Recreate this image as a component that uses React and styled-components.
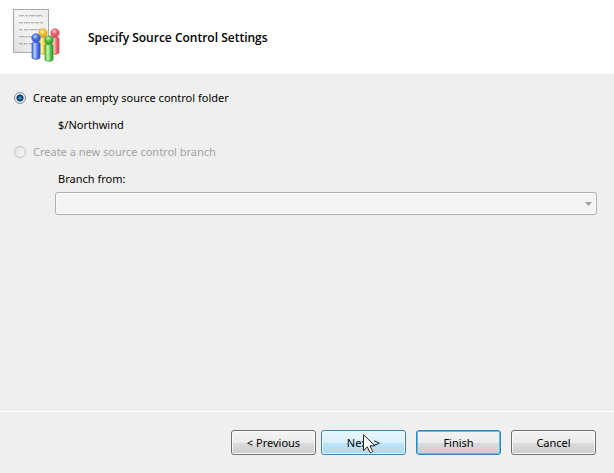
import React, { useState } from "react";
import styled, { createGlobalStyle, css } from "styled-components";

const GlobalStyle = createGlobalStyle`
  * { box-sizing: border-box; }
  body {
    margin: 0;
    background: #efefef;
    color: #000;
    font-family: "Noto Sans", "Open Sans", sans-serif;
    font-size: 11px;
  }
`;

const Wizard = styled.div`
  display: flex;
  flex-direction: column;
  min-height: 100vh;
`;

const Header = styled.header`
  display: flex;
  align-items: flex-start;
  gap: 24px;
  height: 74px;
  padding: 8px 12px;
  background: #fff;
`;

const Title = styled.h1`
  margin: 0;
  padding-top: 20px;
  font-family: "Open Sans", "Noto Sans", sans-serif;
  font-size: 12px;
  line-height: 20px;
  font-weight: 600;
`;

const Content = styled.main`
  flex: 1;
  padding: 10px 17px 10px 14px;
`;

const Option = styled.label`
  display: flex;
  align-items: center;
  gap: 7px;
  height: 27px;
  color: ${(p) => (p.$disabled ? "#a3a3a3" : "#000")};
`;

const Radio = styled.input`
  appearance: none;
  width: 12px;
  height: 12px;
  margin: 0;
  border: 1px solid #8b9196;
  border-radius: 50%;
  background: radial-gradient(circle, #e2e5e7 0 3px, #f7f7f7 5px);

  &:checked {
    background: radial-gradient(circle, #5cc8f0 0, #1c83b5 1px, #0b3458 3px, #e8ecee 4px);
  }

  &:disabled {
    border-color: #bfc2c4;
    background: linear-gradient(135deg, #e0e0e0, #fafafa);
  }
`;

const Detail = styled.div`
  display: flex;
  align-items: center;
  height: 27px;
  padding-left: 44px;
`;

const SelectBox = styled.div`
  display: grid;
  align-items: center;
  margin-left: 41px;

  > * { grid-area: 1 / 1; }
`;

const Select = styled.select`
  appearance: none;
  width: 100%;
  height: 23px;
  padding: 0 20px 0 6px;
  border: 1px solid #abb1b0;
  border-radius: 3px;
  background: #f4f4f4;
  box-shadow: inset 0 0 0 1px #fcfcfc;
  font: inherit;
  opacity: 1;
`;

const Arrow = styled.svg`
  justify-self: end;
  margin-right: 5px;
  pointer-events: none;
`;

const Footer = styled.footer`
  display: flex;
  justify-content: flex-end;
  gap: 10px;
  padding: 18px 18px;
  border-top: 1px solid #fff;
`;

const ButtonPair = styled.div`
  display: flex;
  gap: 5px;
`;

const tones = {
  normal: css`
    border-color: #707070;
    background: linear-gradient(#f3f3f3, #ebebeb 50%, #dcdcdc 50%, #cdcdcd);
    box-shadow: inset 0 0 0 1px #fafafa;
  `,
  hover: css`
    border-color: #3c7fb1;
    background: linear-gradient(#eaf6fd, #d9f0fc 50%, #bee6fd 50%, #a7d9f5);
    box-shadow: inset 0 0 0 1px #f0f9fe;
  `,
  primary: css`
    border-color: #3c7fb1;
    background: linear-gradient(#f3f3f3, #ebebeb 50%, #dcdcdc 50%, #cdcdcd);
    box-shadow: inset 0 0 0 1px #48c5f0;
  `,
};

const Button = styled.button`
  position: relative;
  width: 85px;
  height: 25px;
  padding: 0;
  border: 1px solid;
  border-radius: 3px;
  color: #000;
  font: inherit;
  ${(p) => tones[p.$tone || "normal"]}
`;

const Pointer = styled.svg`
  position: absolute;
  left: 41px;
  top: 3px;
  pointer-events: none;
`;

const people = [
  { id: "yellow", x: 31, y: 25, light: "#fff3a0", mid: "#f2c233", dark: "#d6a02a" },
  { id: "red", x: 43, y: 25, light: "#ffd0d2", mid: "#e8656d", dark: "#d14a55" },
  { id: "blue", x: 24, y: 30, light: "#b9d0ff", mid: "#4b72e0", dark: "#2d50cc" },
  { id: "green", x: 37, y: 32, light: "#c8f5b8", mid: "#52bf45", dark: "#2f9a2a" },
];

const textLines = [
  { y: 7, dash: "5 1 3 1 7 1" },
  { y: 14, dash: "4 1 6 1 3 1" },
  { y: 21, dash: "3 2 4 1 8 1" },
  { y: 28, dash: "5 1 2 1 6 2" },
  { y: 35, dash: "4 1 3 2 5 1" },
];

function TeamDocumentIcon() {
  return (
    <svg width="52" height="56" viewBox="0 0 52 56" aria-hidden="true">
      <defs>
        <linearGradient id="paper" x1="0" y1="1" x2="1" y2="0">
          <stop offset="0" stopColor="#dedede" />
          <stop offset="0.5" stopColor="#f5f5f5" />
          <stop offset="1" stopColor="#ececec" />
        </linearGradient>
        {people.map((p) => (
          <React.Fragment key={p.id}>
            <radialGradient id={`${p.id}-head`} cx="0.4" cy="0.3" r="0.7">
              <stop offset="0" stopColor={p.light} />
              <stop offset="0.5" stopColor={p.mid} />
              <stop offset="1" stopColor={p.dark} />
            </radialGradient>
            <linearGradient id={`${p.id}-body`}>
              <stop offset="0" stopColor={p.mid} />
              <stop offset="0.35" stopColor={p.light} />
              <stop offset="0.7" stopColor={p.mid} />
              <stop offset="1" stopColor={p.dark} />
            </linearGradient>
          </React.Fragment>
        ))}
      </defs>
      <rect x="1.5" y="1.5" width="35" height="43" fill="url(#paper)" stroke="#a9a9a9" />
      {textLines.map((l) => (
        <g key={l.y} fill="none" stroke="#888" strokeWidth="1">
          <path d={`M7 ${l.y}.5H31`} strokeDasharray={l.dash} opacity="0.6" />
          <path d={`M7 ${l.y + 1}.5H31`} strokeDasharray="1 1 2 1" opacity="0.3" />
        </g>
      ))}
      {people.map((p) => (
        <g key={p.id} strokeWidth="0.7" stroke={p.dark}>
          <path
            d={`M${p.x - 4} ${p.y + 5}Q${p.x} ${p.y + 3} ${p.x + 4} ${p.y + 5}V${p.y + 20}Q${p.x} ${p.y + 23} ${p.x - 4} ${p.y + 20}Z`}
            fill={`url(#${p.id}-body)`}
          />
          <circle cx={p.x} cy={p.y} r="4.2" fill={`url(#${p.id}-head)`} />
        </g>
      ))}
    </svg>
  );
}

export default function App() {
  const [mode, setMode] = useState("folder");
  return (
    <Wizard>
      <GlobalStyle />
      <Header>
        <TeamDocumentIcon />
        <Title>Specify Source Control Settings</Title>
      </Header>
      <Content>
        <Option>
          <Radio type="radio" name="mode" checked={mode === "folder"} onChange={() => setMode("folder")} />
          Create an empty source control folder
        </Option>
        <Detail>$/Northwind</Detail>
        <Option $disabled>
          <Radio type="radio" name="mode" disabled checked={mode === "branch"} onChange={() => setMode("branch")} />
          Create a new source control branch
        </Option>
        <Detail as="label" htmlFor="branch">Branch from:</Detail>
        <SelectBox>
          <Select id="branch" disabled />
          <Arrow width="7" height="4" viewBox="0 0 7 4" aria-hidden="true">
            <path d="M0 0H7L3.5 4Z" fill="#a0a0a0" />
          </Arrow>
        </SelectBox>
      </Content>
      <Footer>
        <ButtonPair>
          <Button type="button">&lt; Previous</Button>
          <Button type="button" $tone="hover">
            Next &gt;
            <Pointer width="13" height="20" viewBox="0 0 13 20" aria-hidden="true">
              <path
                d="M0.5 0.8V16.5L4.3 12.9L7 18.6Q8.5 19.3 9.6 17.6L7 11.8H12Z"
                fill="#fff"
                stroke="#222"
              />
            </Pointer>
          </Button>
        </ButtonPair>
        <Button type="button" $tone="primary">Finish</Button>
        <Button type="button">Cancel</Button>
      </Footer>
    </Wizard>
  );
}
